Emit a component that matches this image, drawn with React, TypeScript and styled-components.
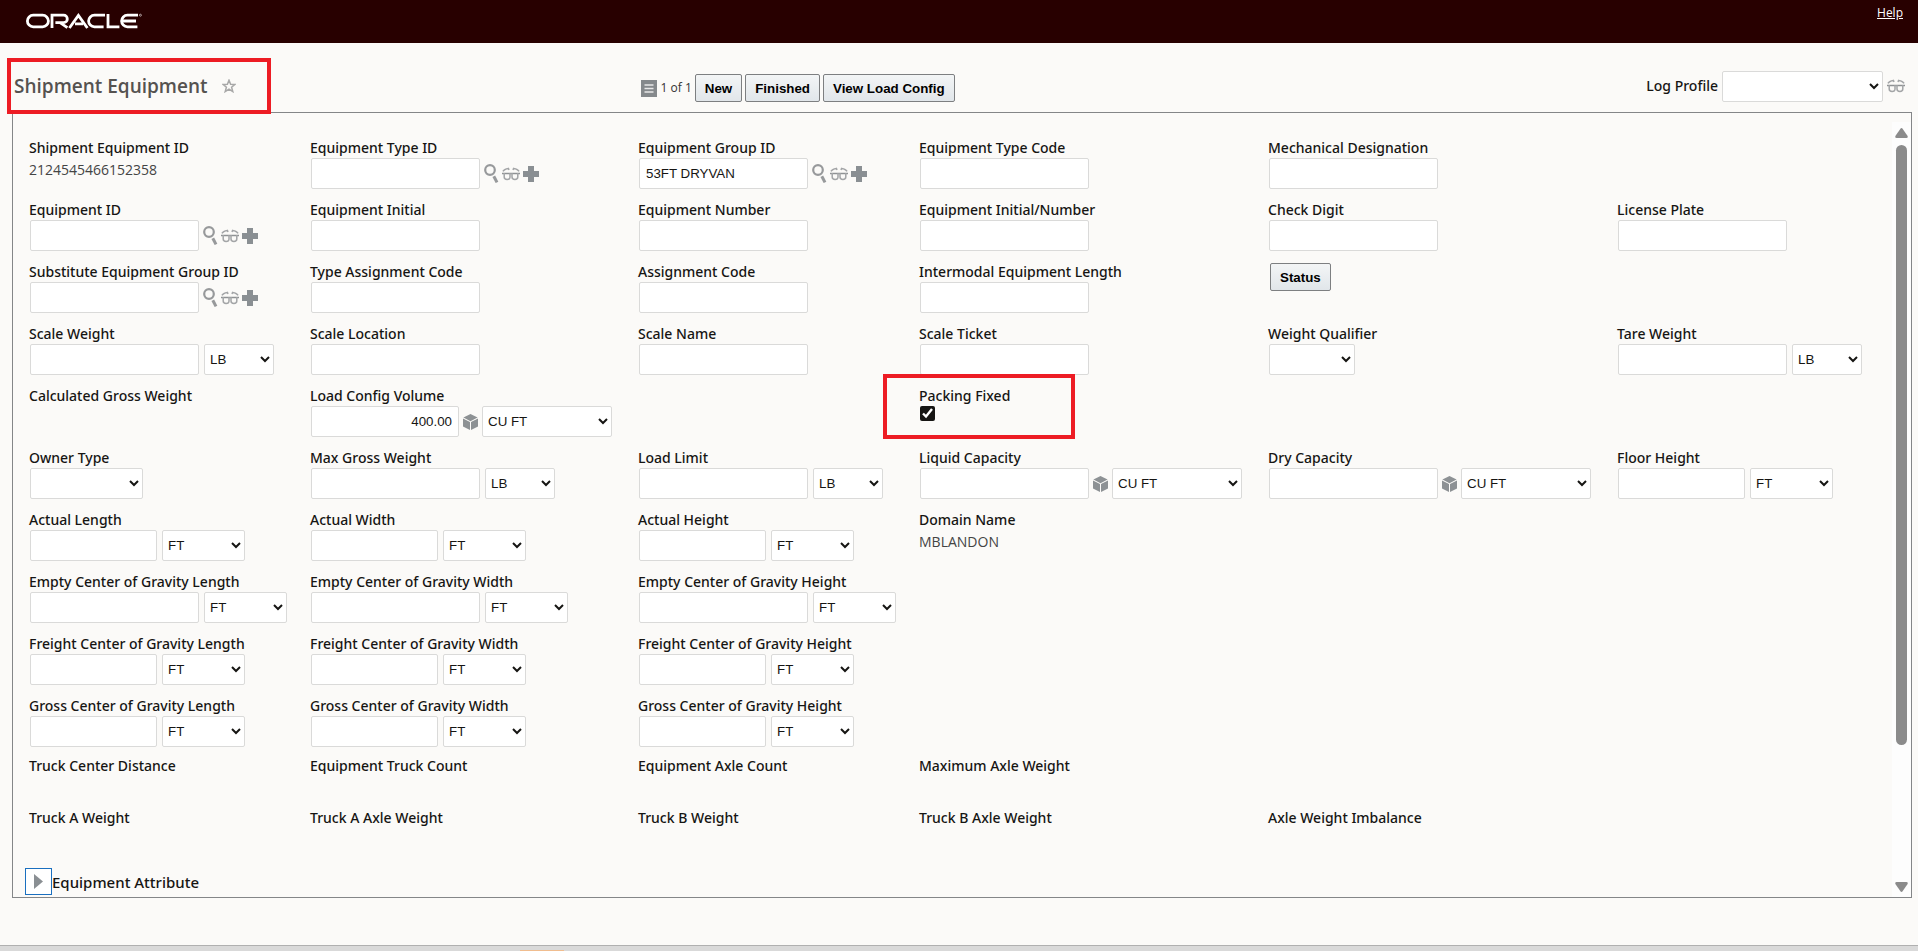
import React, { useId } from "react";
import styled, { createGlobalStyle, css } from "styled-components";

const ui = `"Open Sans", "Noto Sans", sans-serif`;
const labelFont = `"Noto Sans", "Open Sans", sans-serif`;
const form = `"Liberation Sans", Arial, sans-serif`;

const GlobalStyle = createGlobalStyle`
  *, *::before, *::after { box-sizing: border-box; }
  body { margin: 0; background: #fbfaf8; color: #161513; font-family: ${ui}; font-size: 14px; line-height: 20px; }
`;

const Page = styled.div`
  display: flex;
  flex-direction: column;
  min-height: 100vh;
`;

const Header = styled.header`
  display: flex;
  justify-content: space-between;
  align-items: flex-start;
  height: 43px;
  padding: 4px 15px 0 26px;
  background: #280000;
`;

const Logo = styled.svg`
  display: block;
  margin-top: 9px;
`;

const HelpLink = styled.a`
  color: #fff;
  font-size: 12px;
  line-height: 18px;
`;

const TitleBar = styled.div`
  display: grid;
  grid-template-columns: 2fr auto 3fr;
  align-items: center;
  height: 69px;
  padding: 15px 13px 0 7px;
`;

const TitleBox = styled.div`
  display: flex;
  align-items: center;
  justify-self: start;
  gap: 14px;
  width: 264px;
  height: 56px;
  padding: 0 3px;
  border: 4px solid #ed1c24;
  z-index: 1;
`;

const Title = styled.h1`
  margin: 0;
  color: #555250;
  font-size: 19px;
  font-weight: 600;
  line-height: 28px;
`;

const IconButton = styled.button`
  display: block;
  padding: 0;
  border: 0;
  background: none;
  line-height: 0;
`;

const Actions = styled.div`
  display: flex;
  align-items: center;
  gap: 3px;
  padding-top: 4px;
`;

const Counter = styled.span`
  display: flex;
  align-items: center;
  gap: 4px;
  color: #333;
  font-size: 12px;
`;

const Button = styled.button`
  height: 28px;
  padding: 0 9px;
  border: 1px solid #7d7f81;
  border-radius: 2px;
  background: linear-gradient(#f3f5f6, #e1e6ea);
  color: #000;
  font-family: ${form};
  font-weight: bold;
`;

const Profile = styled.div`
  display: flex;
  align-items: center;
  justify-self: end;
  gap: 4px;
`;

const Panel = styled.main`
  display: flex;
  flex: 1;
  margin: 0 6px 47px 12px;
  border: 1px solid #848688;
`;

const Content = styled.div`
  flex: 1;
  min-width: 0;
  padding: 25px 0 1px 12px;
`;

const Grid = styled.div`
  display: grid;
  grid-template-columns:
    minmax(0, 281fr) minmax(0, 328fr) minmax(0, 281fr)
    minmax(0, 349fr) minmax(0, 349fr) minmax(0, 275fr);
  grid-template-rows: repeat(9, 62px) 60px repeat(2, 52px);
  padding-left: 4px;
`;

const Cell = styled.div<{ $col: number; $row: number }>`
  position: relative;
  grid-column: ${(p) => p.$col};
  grid-row: ${(p) => p.$row};
`;

const Label = styled.label`
  display: block;
  font-family: ${labelFont};
  font-weight: 500;
  white-space: nowrap;
`;

const Caption = styled(Label).attrs({ as: "span" })``;

const SectionTitle = styled.h2`
  margin: 0;
  font-family: ${labelFont};
  font-size: 15px;
  font-weight: 500;
`;

const Value = styled.span`
  display: block;
  padding-top: 2px;
  color: #444;
`;

const Controls = styled.div<{ $tight?: boolean }>`
  display: flex;
  align-items: center;
  gap: ${(p) => (p.$tight ? 4 : 5)}px;
  padding-left: 1px;
`;

const box = css`
  height: 31px;
  border: 1px solid #dadad9;
  border-radius: 2px;
  background-color: #fff;
  color: #161513;
  font-family: ${form};
`;

const widths = { long: 169, medium: 148, short: 127 };

const TextInput = styled.input<{ $size: keyof typeof widths; $right?: boolean }>`
  ${box}
  width: ${(p) => widths[p.$size]}px;
  padding: 0 6px;
  text-align: ${(p) => (p.$right ? "right" : "left")};
`;

const Select = styled.select<{ $width: number }>`
  ${box}
  width: ${(p) => p.$width}px;
  padding: 0 3px 0 1px;
`;

const CheckBox = styled.input`
  display: block;
  width: 15px;
  height: 15px;
  margin: 0;
  accent-color: #161513;
`;

const Highlight = styled.span`
  position: absolute;
  top: -12px;
  left: -36px;
  width: 192px;
  height: 65px;
  border: 4px solid #ed1c24;
  pointer-events: none;
`;

const StatusSlot = styled.div`
  padding: 1px 2px;
`;

const Tools = styled.span`
  display: flex;
  align-items: center;
  gap: 3px;
`;

const Section = styled.div`
  display: flex;
  align-items: center;
  margin-top: 8px;
`;

const Expander = styled.button`
  display: grid;
  place-items: center;
  width: 27px;
  height: 27px;
  padding: 0;
  border: 1px solid #1a6fbf;
  background: #fff;
`;

const ScrollTrack = styled.div`
  display: flex;
  flex-direction: column;
  align-items: center;
  width: 19px;
  margin-top: 9px;
  padding: 6px 0 5px;
  background: #fdfdfd;
`;

const ScrollRail = styled.div`
  flex: 1;
  width: 11px;
  margin: 7px 0 5px;
`;

const ScrollThumb = styled.div`
  height: 82%;
  border-radius: 6px;
  background: #8b8b8b;
`;

const BottomEdge = styled.footer`
  height: 6px;
  border-top: 1px solid #b0b0b0;
  background: #d9d9d9;
`;

const Hint = styled.div`
  width: 44px;
  height: 1px;
  margin: 4px 0 0 520px;
  background: #f0bd8f;
`;

const OracleLogo = () => (
  <Logo width="116" height="16" viewBox="0 0 116 16" fill="none" stroke="#fff" strokeWidth="2.8" role="img" aria-label="Oracle">
    <rect x="1.4" y="2.2" width="21" height="11.6" rx="5.8" />
    <path d="M26 15V2.2h11.6a3.7 3.7 0 0 1 0 7.4H29.4M34 9.6l7.4 5" />
    <path d="M43.4 15 52.4 2.4 61.4 15M49 10.8h8" />
    <path d="M79 2.2H68.4a5.8 5.8 0 0 0 0 11.6H77.6" />
    <path d="M82 1v12.8h11.4" />
    <path d="M112 2.2h-10.6a5.8 5.8 0 0 0 0 11.6h10M96.4 8h13.6" />
    <circle cx="114.4" cy="2.2" r="1" strokeWidth="0.6" />
  </Logo>
);

const Search = () => (
  <svg width="15" height="19" viewBox="0 0 15 19" fill="none" stroke="#97999b">
    <circle cx="6" cy="6" r="4.8" strokeWidth="2.2" />
    <path d="M9.8 12.2 13 18.4" strokeWidth="3" />
  </svg>
);

const Glasses = () => (
  <svg width="18" height="14" viewBox="0 0 18 14" fill="none" stroke="#a3a5a7" strokeWidth="1.5">
    <path d="M1 4.4Q2 2 6.4 1.4L7 3M17 4.4Q16 2 11.6 1.4L11 3" />
    <path d="M0 6.5h18" stroke="#8f9294" />
    <path d="M2.2 6v4q0 2.4 2.9 2.4T8 10V6M10 6v4q0 2.4 2.9 2.4t2.9-2.4V6" />
  </svg>
);

const Plus = () => (
  <svg width="16" height="16" viewBox="0 0 16 16" fill="#8a8f93">
    <path d="M5 0h6v5h5v6h-5v5H5v-5H0V5h5z" />
  </svg>
);

const Cube = () => (
  <svg width="15" height="16" viewBox="0 0 15 16" fill="#8d9194">
    <path d="M7.5 0 14.6 3.6 7.5 7.2.4 3.6z" />
    <path d="M0 4.4 7 8V16L0 12.6zM15 4.4 8 8V16l7-3.4z" />
  </svg>
);

const Lookup = () => (
  <Tools>
    <IconButton type="button" aria-label="Search"><Search /></IconButton>
    <IconButton type="button" aria-label="View"><Glasses /></IconButton>
    <IconButton type="button" aria-label="Add"><Plus /></IconButton>
  </Tools>
);

type FieldDef = {
  row: number;
  col: number;
  label: string;
  kind?: "input" | "select" | "caption" | "value" | "check";
  size?: keyof typeof widths;
  value?: string;
  unit?: "LB" | "FT" | "CU FT";
  lookup?: boolean;
  width?: number;
};

const unitWidth = { LB: 70, FT: 83, "CU FT": 130 };

const fields: FieldDef[] = [
  { row: 1, col: 1, label: "Shipment Equipment ID", kind: "value", value: "2124545466152358" },
  { row: 1, col: 2, label: "Equipment Type ID", lookup: true },
  { row: 1, col: 3, label: "Equipment Group ID", value: "53FT DRYVAN", lookup: true },
  { row: 1, col: 4, label: "Equipment Type Code" },
  { row: 1, col: 5, label: "Mechanical Designation" },
  { row: 2, col: 1, label: "Equipment ID", lookup: true },
  { row: 2, col: 2, label: "Equipment Initial" },
  { row: 2, col: 3, label: "Equipment Number" },
  { row: 2, col: 4, label: "Equipment Initial/Number" },
  { row: 2, col: 5, label: "Check Digit" },
  { row: 2, col: 6, label: "License Plate" },
  { row: 3, col: 1, label: "Substitute Equipment Group ID", lookup: true },
  { row: 3, col: 2, label: "Type Assignment Code" },
  { row: 3, col: 3, label: "Assignment Code" },
  { row: 3, col: 4, label: "Intermodal Equipment Length" },
  { row: 4, col: 1, label: "Scale Weight", unit: "LB" },
  { row: 4, col: 2, label: "Scale Location" },
  { row: 4, col: 3, label: "Scale Name" },
  { row: 4, col: 4, label: "Scale Ticket" },
  { row: 4, col: 5, label: "Weight Qualifier", kind: "select", width: 86 },
  { row: 4, col: 6, label: "Tare Weight", unit: "LB" },
  { row: 5, col: 1, label: "Calculated Gross Weight", kind: "caption" },
  { row: 5, col: 2, label: "Load Config Volume", size: "medium", value: "400.00", unit: "CU FT" },
  { row: 5, col: 4, label: "Packing Fixed", kind: "check" },
  { row: 6, col: 1, label: "Owner Type", kind: "select", width: 113 },
  { row: 6, col: 2, label: "Max Gross Weight", unit: "LB" },
  { row: 6, col: 3, label: "Load Limit", unit: "LB" },
  { row: 6, col: 4, label: "Liquid Capacity", unit: "CU FT" },
  { row: 6, col: 5, label: "Dry Capacity", unit: "CU FT" },
  { row: 6, col: 6, label: "Floor Height", size: "short", unit: "FT" },
  { row: 7, col: 1, label: "Actual Length", size: "short", unit: "FT" },
  { row: 7, col: 2, label: "Actual Width", size: "short", unit: "FT" },
  { row: 7, col: 3, label: "Actual Height", size: "short", unit: "FT" },
  { row: 7, col: 4, label: "Domain Name", kind: "value", value: "MBLANDON" },
  { row: 8, col: 1, label: "Empty Center of Gravity Length", unit: "FT" },
  { row: 8, col: 2, label: "Empty Center of Gravity Width", unit: "FT" },
  { row: 8, col: 3, label: "Empty Center of Gravity Height", unit: "FT" },
  { row: 9, col: 1, label: "Freight Center of Gravity Length", size: "short", unit: "FT" },
  { row: 9, col: 2, label: "Freight Center of Gravity Width", size: "short", unit: "FT" },
  { row: 9, col: 3, label: "Freight Center of Gravity Height", size: "short", unit: "FT" },
  { row: 10, col: 1, label: "Gross Center of Gravity Length", size: "short", unit: "FT" },
  { row: 10, col: 2, label: "Gross Center of Gravity Width", size: "short", unit: "FT" },
  { row: 10, col: 3, label: "Gross Center of Gravity Height", size: "short", unit: "FT" },
  { row: 11, col: 1, label: "Truck Center Distance", kind: "caption" },
  { row: 11, col: 2, label: "Equipment Truck Count", kind: "caption" },
  { row: 11, col: 3, label: "Equipment Axle Count", kind: "caption" },
  { row: 11, col: 4, label: "Maximum Axle Weight", kind: "caption" },
  { row: 12, col: 1, label: "Truck A Weight", kind: "caption" },
  { row: 12, col: 2, label: "Truck A Axle Weight", kind: "caption" },
  { row: 12, col: 3, label: "Truck B Weight", kind: "caption" },
  { row: 12, col: 4, label: "Truck B Axle Weight", kind: "caption" },
  { row: 12, col: 5, label: "Axle Weight Imbalance", kind: "caption" },
];

const Field = ({ row, col, label, kind = "input", size = "long", value, unit, lookup, width = 0 }: FieldDef) => {
  const id = useId();
  if (kind === "caption" || kind === "value") {
    return (
      <Cell $col={col} $row={row}>
        <Caption>{label}</Caption>
        {value && <Value>{value}</Value>}
      </Cell>
    );
  }
  return (
    <Cell $col={col} $row={row}>
      <Label htmlFor={id}>{label}</Label>
      <Controls $tight={lookup || unit === "CU FT"}>
        {kind === "check" && <CheckBox id={id} type="checkbox" defaultChecked />}
        {kind === "select" && <Select id={id} $width={width}><option></option></Select>}
        {kind === "input" && (
          <TextInput id={id} type="text" $size={size} $right={size === "medium"} defaultValue={value} />
        )}
        {lookup && <Lookup />}
        {unit === "CU FT" && <Cube />}
        {unit && (
          <Select $width={unitWidth[unit]} aria-label={`${label} unit`}>
            <option>{unit}</option>
          </Select>
        )}
      </Controls>
      {kind === "check" && <Highlight />}
    </Cell>
  );
};

export default function App() {
  return (
    <Page>
      <GlobalStyle />
      <Header>
        <OracleLogo />
        <HelpLink href="#help">Help</HelpLink>
      </Header>
      <TitleBar>
        <TitleBox>
          <Title>Shipment Equipment</Title>
          <IconButton type="button" aria-label="Add to favorites">
            <svg width="14" height="14" viewBox="0 0 14 14" fill="none" stroke="#a8a8a8" strokeWidth="1.5">
              <path d="M7 1.2 8.6 5.2 13 5.4 9.6 8.2 10.8 12.6 7 10.2 3.2 12.6 4.4 8.2 1 5.4 5.4 5.2z" />
            </svg>
          </IconButton>
        </TitleBox>
        <Actions>
          <Counter>
            <svg width="16" height="17" viewBox="0 0 16 17">
              <path fill="#85898c" d="M0 0h16v17H0z" />
              <path stroke="#e8e8e8" strokeWidth="1.4" d="M3.5 5h9M3.5 8.5h9M3.5 12h9" />
            </svg>
            1 of 1
          </Counter>
          <Button type="button">New</Button>
          <Button type="button">Finished</Button>
          <Button type="button">View Load Config</Button>
        </Actions>
        <Profile>
          <Label htmlFor="log-profile">Log Profile</Label>
          <Select id="log-profile" $width={161}><option></option></Select>
          <IconButton type="button" aria-label="View log profile"><Glasses /></IconButton>
        </Profile>
      </TitleBar>
      <Panel>
        <Content>
          <Grid>
            {fields.map((f) => <Field key={f.label} {...f} />)}
            <Cell $col={5} $row={3}>
              <StatusSlot><Button type="button">Status</Button></StatusSlot>
            </Cell>
          </Grid>
          <Section>
            <Expander type="button" aria-label="Expand Equipment Attribute">
              <svg width="9" height="15" viewBox="0 0 9 15" fill="#8a8f93"><path d="M0 0 9 7.5 0 15z" /></svg>
            </Expander>
            <SectionTitle>Equipment Attribute</SectionTitle>
          </Section>
        </Content>
        <ScrollTrack>
          <svg width="13" height="10" viewBox="0 0 13 10" fill="#8b8b8b"><path d="M5.4.8q1.1-1.4 2.2 0L12.6 8q.6 2-1.2 2H1.6Q-.2 10 .4 8z" /></svg>
          <ScrollRail><ScrollThumb /></ScrollRail>
          <svg width="13" height="10" viewBox="0 0 13 10" fill="#8b8b8b"><path d="M5.4 9.2q1.1 1.4 2.2 0L12.6 2q.6-2-1.2-2H1.6Q-.2 0 .4 2z" /></svg>
        </ScrollTrack>
      </Panel>
      <BottomEdge><Hint /></BottomEdge>
    </Page>
  );
}
